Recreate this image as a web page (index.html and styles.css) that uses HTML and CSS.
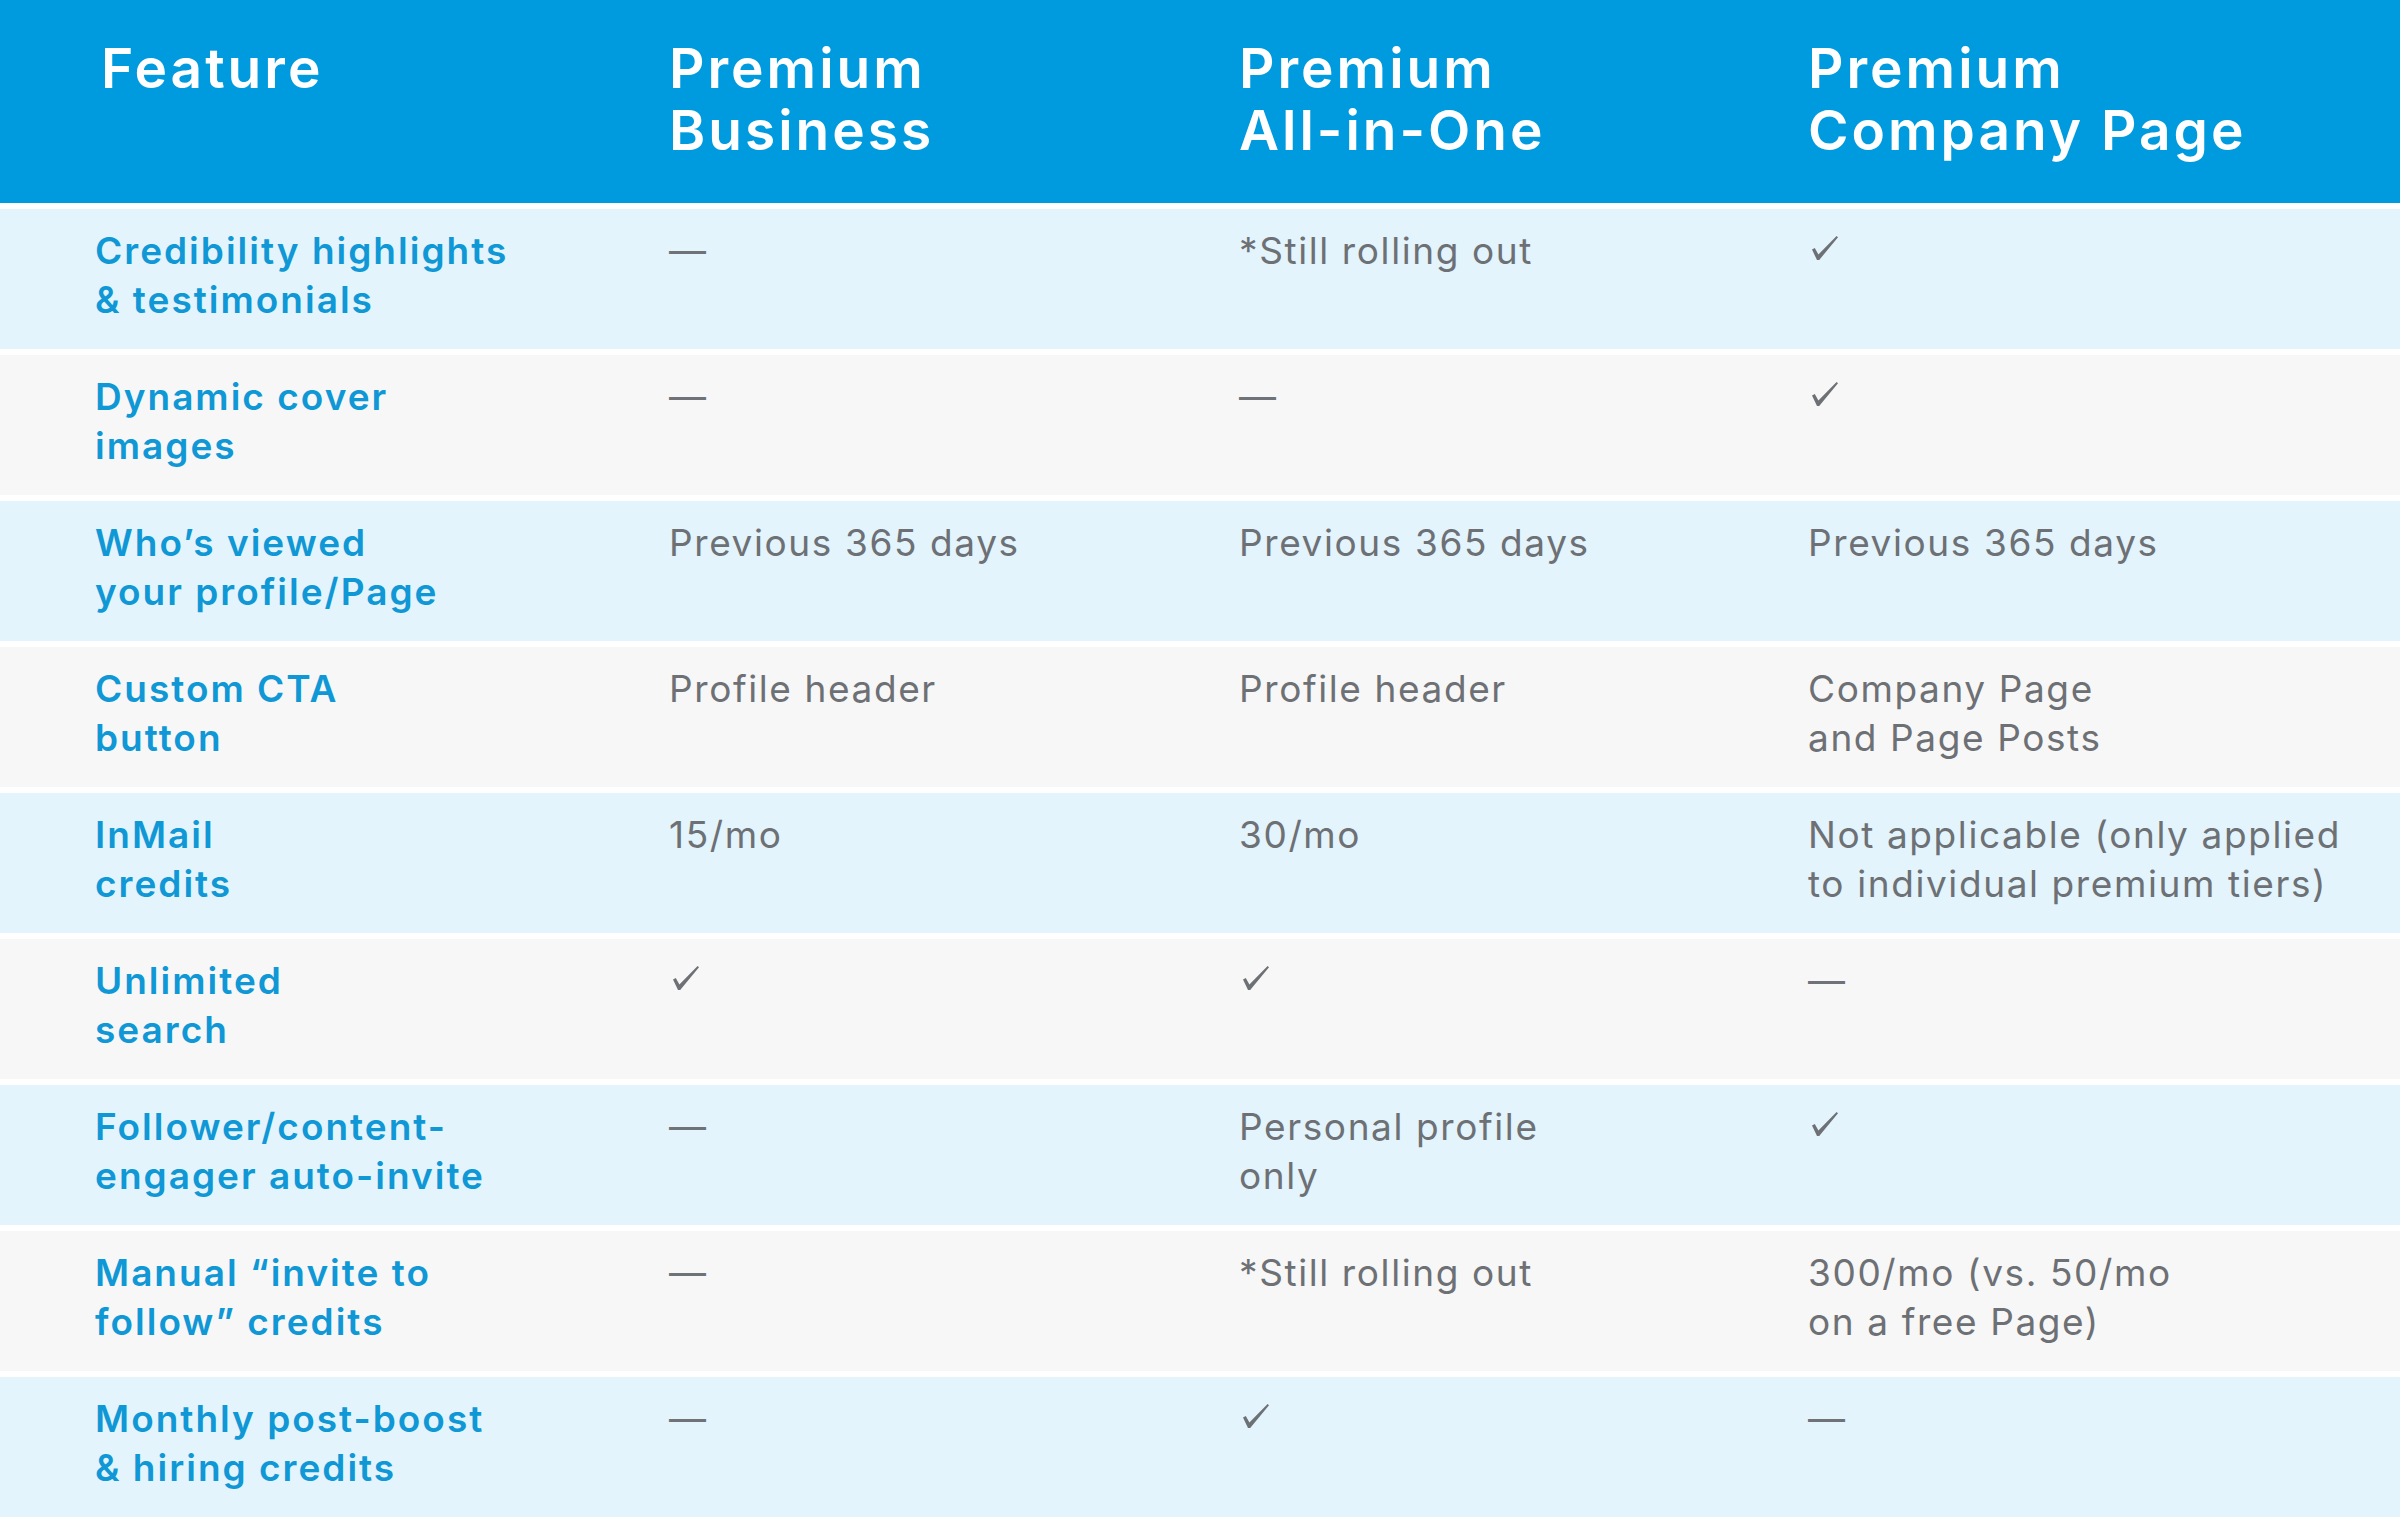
FILE: index.html
```html
<!DOCTYPE html>
<html lang="en">
<head>
<meta charset="utf-8">
<title>LinkedIn Premium comparison</title>
<link rel="stylesheet" href="styles.css">
</head>
<body>
<div class="table">
  <div class="row head">
    <div class="cell first">Feature</div>
    <div class="cell">Premium<br>Business</div>
    <div class="cell">Premium<br>All-in-One</div>
    <div class="cell">Premium<br>Company Page</div>
  </div>

  <div class="row blue">
    <div class="cell feat">Credibility highlights<br>&amp; testimonials</div>
    <div class="cell val"><span class="dash">—</span></div>
    <div class="cell val">*Still rolling out</div>
    <div class="cell val"><svg class="check" viewBox="0 0 26 24" width="26" height="24"><path d="M0 13.6 L2.8 12 L6.4 18.6 L24.6 0 L26 1.2 L7.2 24 L5 24 Z"/></svg></div>
  </div>

  <div class="row gray">
    <div class="cell feat">Dynamic cover<br>images</div>
    <div class="cell val"><span class="dash">—</span></div>
    <div class="cell val"><span class="dash">—</span></div>
    <div class="cell val"><svg class="check" viewBox="0 0 26 24" width="26" height="24"><path d="M0 13.6 L2.8 12 L6.4 18.6 L24.6 0 L26 1.2 L7.2 24 L5 24 Z"/></svg></div>
  </div>

  <div class="row blue">
    <div class="cell feat">Who’s viewed<br>your profile/Page</div>
    <div class="cell val">Previous 365 days</div>
    <div class="cell val">Previous 365 days</div>
    <div class="cell val">Previous 365 days</div>
  </div>

  <div class="row gray">
    <div class="cell feat">Custom CTA<br>button</div>
    <div class="cell val">Profile header</div>
    <div class="cell val">Profile header</div>
    <div class="cell val">Company Page<br>and Page Posts</div>
  </div>

  <div class="row blue">
    <div class="cell feat">InMail<br>credits</div>
    <div class="cell val">15/mo</div>
    <div class="cell val">30/mo</div>
    <div class="cell val">Not applicable (only applied<br>to individual premium tiers)</div>
  </div>

  <div class="row gray">
    <div class="cell feat">Unlimited<br>search</div>
    <div class="cell val"><svg class="check" viewBox="0 0 26 24" width="26" height="24"><path d="M0 13.6 L2.8 12 L6.4 18.6 L24.6 0 L26 1.2 L7.2 24 L5 24 Z"/></svg></div>
    <div class="cell val"><svg class="check" viewBox="0 0 26 24" width="26" height="24"><path d="M0 13.6 L2.8 12 L6.4 18.6 L24.6 0 L26 1.2 L7.2 24 L5 24 Z"/></svg></div>
    <div class="cell val"><span class="dash">—</span></div>
  </div>

  <div class="row blue">
    <div class="cell feat">Follower/content-<br>engager auto-invite</div>
    <div class="cell val"><span class="dash">—</span></div>
    <div class="cell val">Personal profile<br>only</div>
    <div class="cell val"><svg class="check" viewBox="0 0 26 24" width="26" height="24"><path d="M0 13.6 L2.8 12 L6.4 18.6 L24.6 0 L26 1.2 L7.2 24 L5 24 Z"/></svg></div>
  </div>

  <div class="row gray">
    <div class="cell feat">Manual “invite to<br>follow” credits</div>
    <div class="cell val"><span class="dash">—</span></div>
    <div class="cell val">*Still rolling out</div>
    <div class="cell val">300/mo (vs. 50/mo<br>on a free Page)</div>
  </div>

  <div class="row blue">
    <div class="cell feat">Monthly post-boost<br>&amp; hiring credits</div>
    <div class="cell val"><span class="dash">—</span></div>
    <div class="cell val"><svg class="check" viewBox="0 0 26 24" width="26" height="24"><path d="M0 13.6 L2.8 12 L6.4 18.6 L24.6 0 L26 1.2 L7.2 24 L5 24 Z"/></svg></div>
    <div class="cell val"><span class="dash">—</span></div>
  </div>
</div>
</body>
</html>
```

FILE: styles.css
```css
html, body {
  margin: 0;
  padding: 0;
  background: #ffffff;
}

body {
  font-family: Inter, "Open Sans", "DejaVu Sans", sans-serif;
}

.table {
  display: flex;
  flex-direction: column;
  gap: 6px;
}

.row {
  display: grid;
  grid-template-columns: 574px 570px 569px 1fr;
  padding-left: 95px;
  box-sizing: border-box;
}

.head {
  background: #009bde;
  height: 203px;
  padding-top: 37px;
  color: #ffffff;
  font-size: 55px;
  font-weight: 600;
  line-height: 62px;
  letter-spacing: 3px;
}

.head .first {
  padding-left: 6px;
}

.blue {
  background: #e3f4fc;
}

.gray {
  background: #f7f7f7;
}

.blue, .gray {
  height: 140px;
  padding-top: 17px;
  font-size: 37px;
  line-height: 49px;
}

.feat {
  color: #0f98d5;
  font-weight: 600;
  letter-spacing: 2px;
}

.val {
  color: #6d7074;
  font-weight: 400;
  letter-spacing: 1.6px;
}

.dash {
  display: inline-block;
  color: #6f7277;
  letter-spacing: 0;
}

.check {
  fill: #6d7074;
  vertical-align: 4px;
  margin-left: 4px;
}
```
